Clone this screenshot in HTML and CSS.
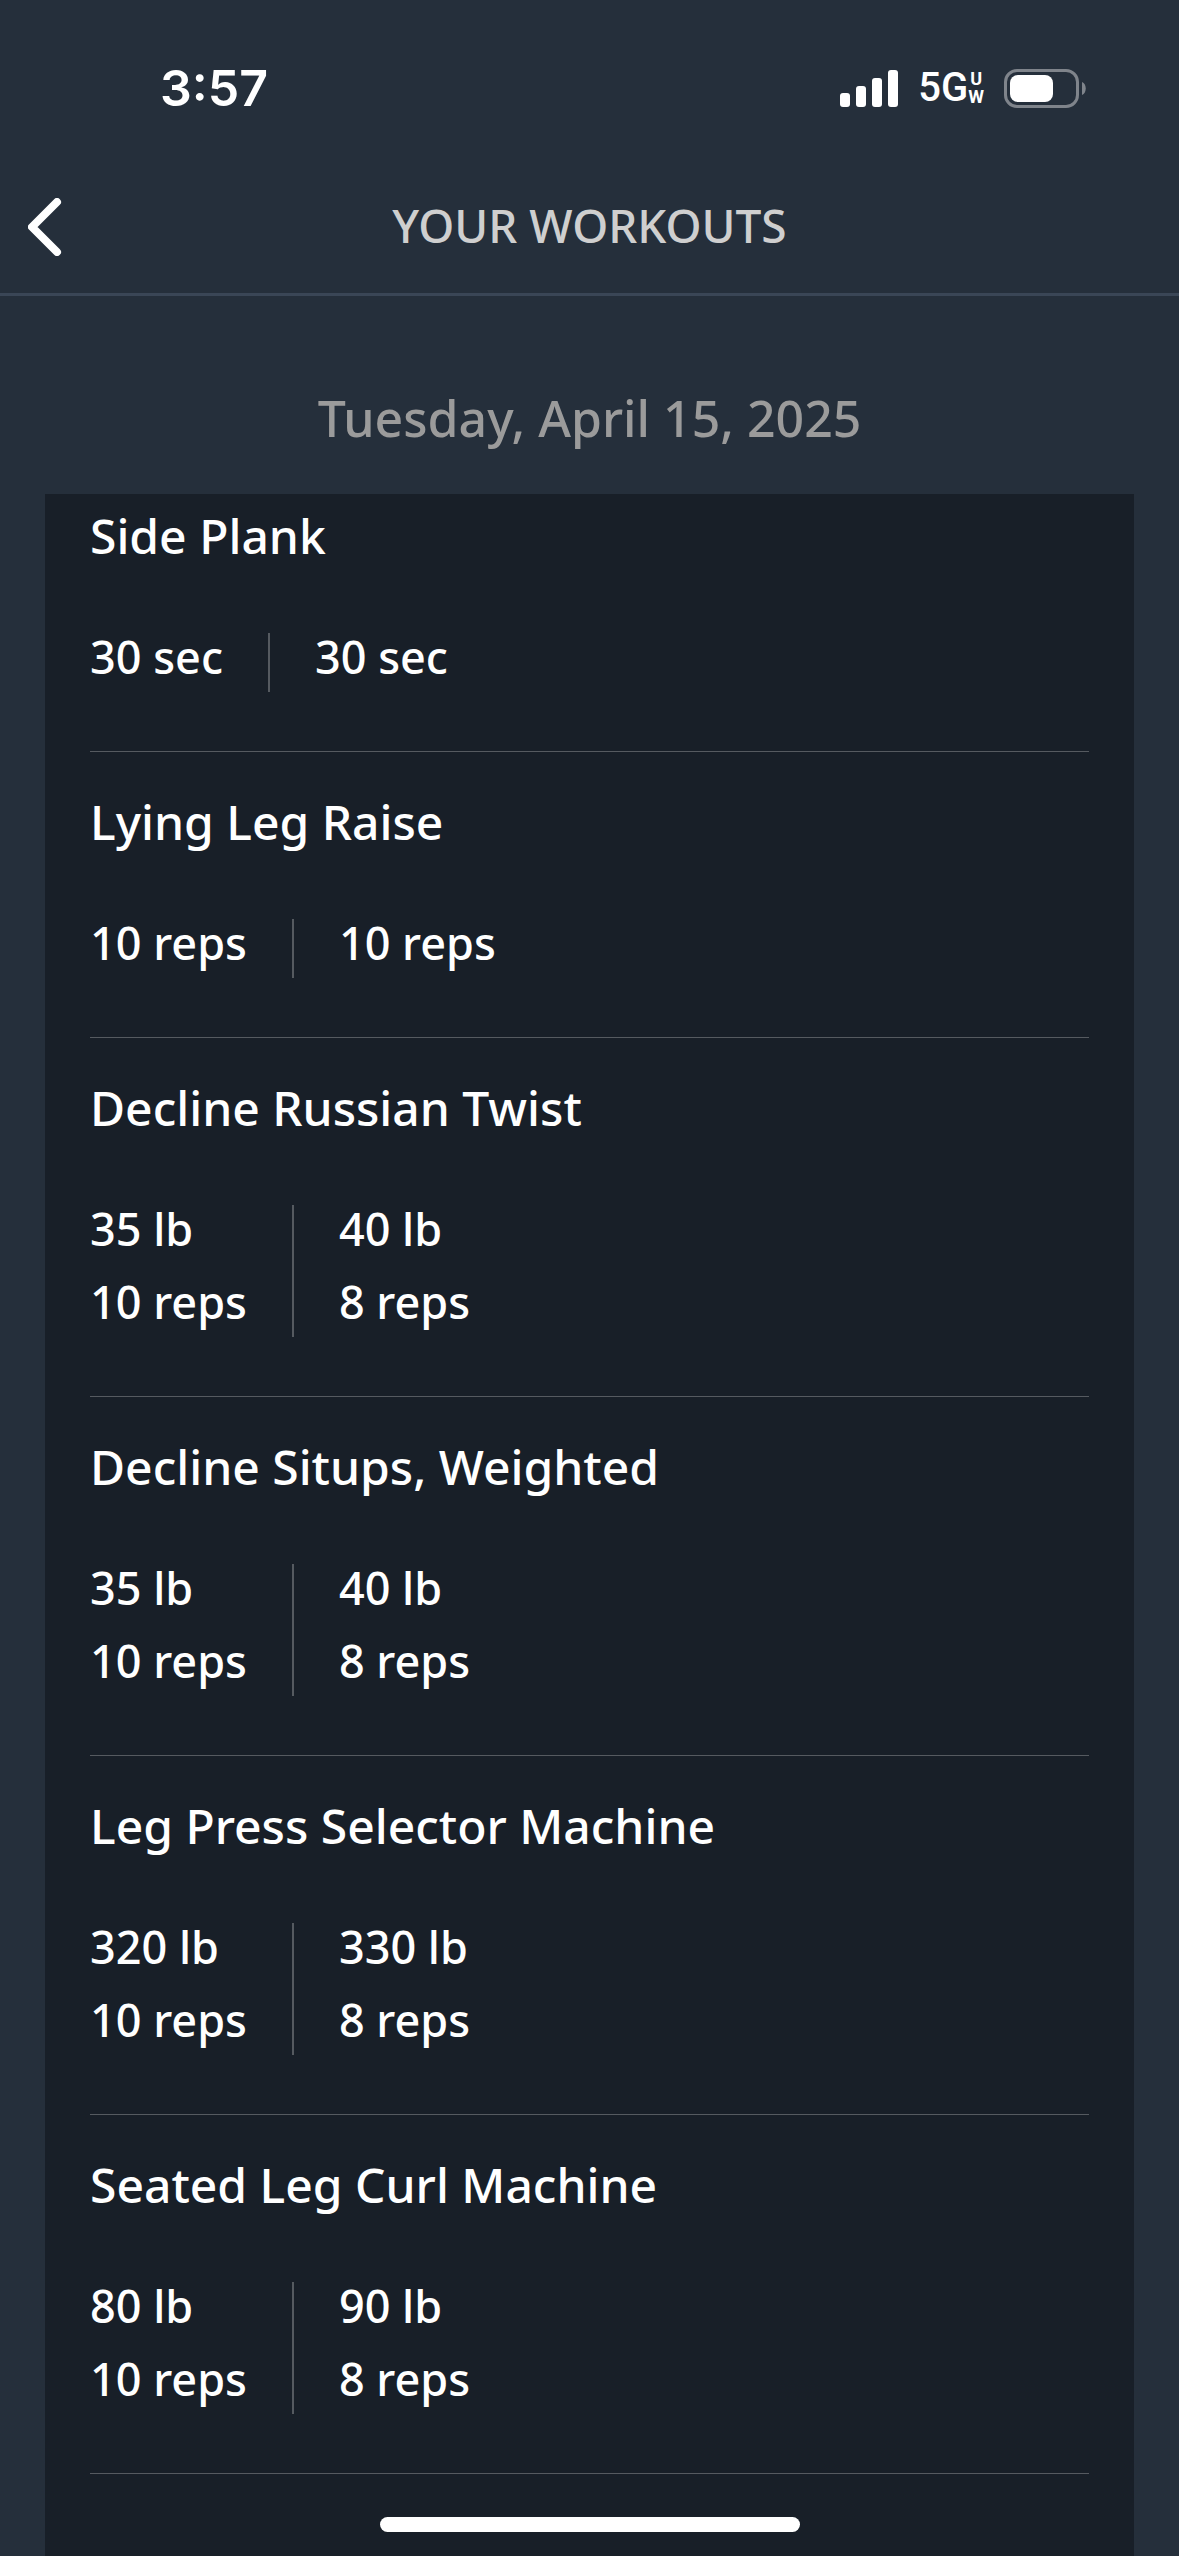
FILE: index.html
```html
<!DOCTYPE html>
<html lang="en">
<head>
    <meta charset="UTF-8">
    <meta name="viewport" content="width=device-width, initial-scale=1.0">
    <title>Your Workouts</title>
    <link rel="stylesheet" href="styles.css">
</head>
<body>
    <div class="status-bar">
        <span class="time">3:57</span>
        <div class="status-icons">
            <svg class="signal" width="58" height="37" viewBox="0 0 58 37" fill="#fff" aria-hidden="true">
                <rect x="0" y="23" width="10" height="14" rx="3"/>
                <rect x="16" y="16" width="10" height="21" rx="3"/>
                <rect x="32" y="8" width="10" height="29" rx="3"/>
                <rect x="48" y="0" width="10" height="37" rx="3"/>
            </svg>
            <span class="network">5G<span class="network-type"><span>U</span><span>W</span></span></span>
            <svg class="battery" width="82" height="39" viewBox="0 0 82 39" aria-hidden="true">
                <rect x="1.5" y="1.5" width="72" height="36" rx="11.5" fill="none" stroke="#7f848b" stroke-width="3"/>
                <rect x="6" y="6" width="43" height="27" rx="8" fill="#fff"/>
                <path d="M78 13c5 2 5 11 0 13z" fill="#7f848b"/>
            </svg>
        </div>
    </div>

    <header class="header">
        <a href="#" class="back" aria-label="Back">
            <svg width="34" height="58" viewBox="0 0 34 58" fill="none" stroke="#fff" stroke-width="8" stroke-linecap="round" stroke-linejoin="round" aria-hidden="true">
                <path d="M29 4L4 29l25 25"/>
            </svg>
        </a>
        <h1>YOUR WORKOUTS</h1>
    </header>

    <main>
        <h2 class="date">Tuesday, April 15, 2025</h2>
        <div class="card">
            <section class="exercise">
                <h3>Side Plank</h3>
                <ul class="sets">
                    <li><span>30 sec</span></li>
                    <li><span>30 sec</span></li>
                </ul>
            </section>
            <section class="exercise">
                <h3>Lying Leg Raise</h3>
                <ul class="sets">
                    <li><span>10 reps</span></li>
                    <li><span>10 reps</span></li>
                </ul>
            </section>
            <section class="exercise">
                <h3>Decline Russian Twist</h3>
                <ul class="sets">
                    <li><span>35 lb</span><span>10 reps</span></li>
                    <li><span>40 lb</span><span>8 reps</span></li>
                </ul>
            </section>
            <section class="exercise">
                <h3>Decline Situps, Weighted</h3>
                <ul class="sets">
                    <li><span>35 lb</span><span>10 reps</span></li>
                    <li><span>40 lb</span><span>8 reps</span></li>
                </ul>
            </section>
            <section class="exercise">
                <h3>Leg Press Selector Machine</h3>
                <ul class="sets">
                    <li><span>320 lb</span><span>10 reps</span></li>
                    <li><span>330 lb</span><span>8 reps</span></li>
                </ul>
            </section>
            <section class="exercise">
                <h3>Seated Leg Curl Machine</h3>
                <ul class="sets">
                    <li><span>80 lb</span><span>10 reps</span></li>
                    <li><span>90 lb</span><span>8 reps</span></li>
                </ul>
            </section>
        </div>
    </main>

    <div class="home-indicator"></div>
</body>
</html>
```

FILE: styles.css
```css
* { box-sizing: border-box; }
body { margin: 0; min-height: 100vh; display: flex; flex-direction: column; background-color: #252f3b; color: #fff; font-family: "Noto Sans", sans-serif; font-weight: 500; }
h1, h2, h3, ul { margin: 0; padding: 0; font-weight: 500; }

/* Status bar */
.status-bar { display: flex; justify-content: space-between; align-items: center; height: 176px; padding: 0 93px 0 160px; font-family: Inter, sans-serif; }
.time { font-size: 50px; font-weight: 600; line-height: 60px; }
.status-icons { display: flex; align-items: center; gap: 20px; }
.network { display: flex; align-items: center; font-family: Roboto, sans-serif; font-size: 40px; line-height: 40px; }
.network-type { display: flex; flex-direction: column; font-size: 18px; font-weight: 700; line-height: 18px; text-align: center; }

/* Header */
.header { display: grid; grid-template-columns: 90px 1fr 90px; align-items: center; height: 120px; padding-bottom: 16px; border-bottom: 3px solid #3a4656; }
.back { display: flex; padding-left: 28px; }
.header h1 { padding-bottom: 4px; color: #cfcfcf; font-size: 46px; line-height: 60px; text-align: center; }

main { flex: 1; display: flex; flex-direction: column; padding: 0 45px; }
.date { padding: 90px 0 44px; color: #9b9b9b; font-size: 50px; line-height: 64px; text-align: center; }

/* Workout list */
.card { flex: 1; padding: 0 45px; background-color: #181f28; }
.exercise { padding: 38px 0 59px; border-bottom: 1px solid #555a60; }
.exercise:first-child { padding-top: 10px; }
.exercise h3 { margin-bottom: 65px; font-size: 48px; line-height: 64px; }
.sets { display: flex; list-style: none; }
.sets li { display: flex; flex-direction: column; gap: 25px; padding: 0 45px 11px 0; font-size: 45px; line-height: 48px; }
.sets li + li { padding-left: 45px; border-left: 2px solid #555a60; }

.home-indicator { position: fixed; bottom: 24px; left: 50%; width: 420px; height: 15px; margin-left: -210px; border-radius: 8px; background-color: #fff; }
```
